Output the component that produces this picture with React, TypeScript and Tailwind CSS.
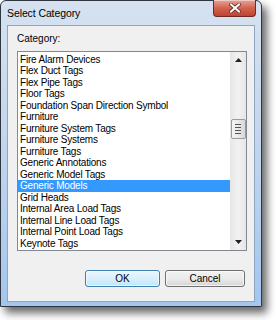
import React from "react";

const items = [
  "Fire Alarm Devices",
  "Flex Duct Tags",
  "Flex Pipe Tags",
  "Floor Tags",
  "Foundation Span Direction Symbol",
  "Furniture",
  "Furniture System Tags",
  "Furniture Systems",
  "Furniture Tags",
  "Generic Annotations",
  "Generic Model Tags",
  "Generic Models",
  "Grid Heads",
  "Internal Area Load Tags",
  "Internal Line Load Tags",
  "Internal Point Load Tags",
  "Keynote Tags",
];

const selected = "Generic Models";

function CloseButton() {
  return (
    <div className="-mt-px mr-[5px] flex h-[17px] w-[43px] items-center justify-center rounded-b-[4px] border border-t-0 border-[#6e2b22] bg-gradient-to-b from-[#e6a397] via-[#d2634f] to-[#c0422f] shadow-[inset_0_1px_0_rgba(255,255,255,0.45)]">
      <svg width="12" height="10" viewBox="0 0 12 10">
        <path d="M2 1.5 L10 8.5 M10 1.5 L2 8.5" stroke="#5a2a24" strokeWidth="3.6" strokeLinecap="square" />
        <path d="M2 1.5 L10 8.5 M10 1.5 L2 8.5" stroke="#ffffff" strokeWidth="2" strokeLinecap="square" />
      </svg>
    </div>
  );
}

function ScrollBar() {
  return (
    <div className="flex w-[16px] flex-col items-center bg-gradient-to-r from-[#e6e6e6] via-[#f2f2f2] to-[#e6e6e6]">
      <div className="flex h-[16px] w-full items-center justify-center">
        <svg width="7" height="4" viewBox="0 0 7 4">
          <path d="M0 4 L3.5 0 L7 4 Z" fill="#222" />
        </svg>
      </div>
      <div className="mt-[51px] flex h-[20px] w-[15px] flex-col items-center justify-center gap-[2px] rounded-[2px] border border-[#9a9a9a] bg-gradient-to-r from-[#f4f4f4] via-[#e8e8e8] to-[#d8d8d8]">
        <div className="h-px w-[6px] bg-[#555]" />
        <div className="h-px w-[6px] bg-[#555]" />
        <div className="h-px w-[6px] bg-[#555]" />
        <div className="h-px w-[6px] bg-[#555]" />
      </div>
      <div className="flex-1" />
      <div className="flex h-[16px] w-full items-center justify-center">
        <svg width="7" height="4" viewBox="0 0 7 4">
          <path d="M0 0 L3.5 4 L7 0 Z" fill="#222" />
        </svg>
      </div>
    </div>
  );
}

export default function App() {
  return (
    <div className="h-[320px] w-[276px] overflow-hidden bg-white font-['Liberation_Sans',Arial,sans-serif] text-black">
      <div className="flex h-[307px] w-[262px] flex-col rounded-t-[6px] border border-[#2f3640] bg-gradient-to-b from-[#d6e2f0] via-[#c0d5ee] to-[#a3c6ef] shadow-[5px_6px_8px_rgba(0,0,0,0.6)]">
        <div className="flex h-[24px] items-start justify-between">
          <span className="pl-[6px] pt-[6px] text-[10.5px] leading-[13px] tracking-[-0.1px]">Select Category</span>
          <CloseButton />
        </div>
        <div className="mx-[6px] flex h-[277px] flex-col border border-[#8fa5c0] bg-[#f0f0f0]">
          <div className="pl-[9px] pt-[7px] text-[10px] leading-[12px]">Category:</div>
          <div className="ml-[9px] mt-[6px] flex h-[200px] w-[230px] border border-[#828790] bg-white">
            <div className="flex-1 pt-[1.5px] text-[10px] tracking-[-0.2px]">
              {items.map((it) => (
                <div
                  key={it}
                  className={
                    it === selected
                      ? "h-[11.5px] bg-[#3399ff] pl-[2px] leading-[11.5px] text-white"
                      : "h-[11.5px] pl-[2px] leading-[11.5px]"
                  }
                >
                  {it}
                </div>
              ))}
            </div>
            <ScrollBar />
          </div>
          <div className="mt-[19px] flex justify-end gap-[5px] pr-[9px]">
            <button className="h-[17px] w-[75px] rounded-[3px] border border-[#3c7fb1] bg-gradient-to-b from-[#eaf6fd] via-[#d9f0fc] to-[#bee6fd] text-[10px] leading-[15px] shadow-[inset_0_0_0_1px_rgba(255,255,255,0.7)]">
              OK
            </button>
            <button className="h-[17px] w-[80px] rounded-[3px] border border-[#707070] bg-gradient-to-b from-[#f2f2f2] via-[#ebebeb] to-[#d6d6d6] text-[10px] leading-[15px] shadow-[inset_0_0_0_1px_rgba(255,255,255,0.7)]">
              Cancel
            </button>
          </div>
        </div>
      </div>
    </div>
  );
}
